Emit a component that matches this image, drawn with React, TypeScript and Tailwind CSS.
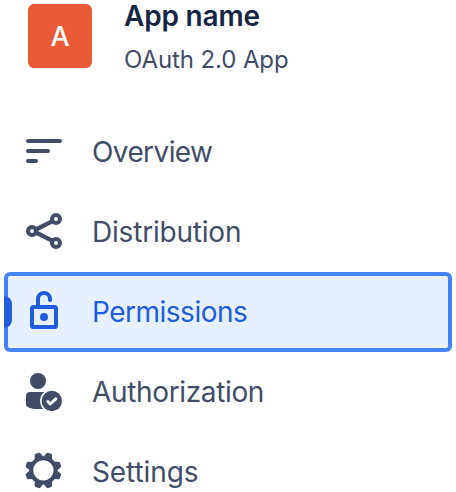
import type { ReactNode } from "react";

function OverviewIcon() {
  return (
    <svg className="size-12" viewBox="0 0 48 48" fill="none" stroke="currentColor" strokeWidth="4" strokeLinecap="round">
      <path d="M8 13H40M8 23H28M8 33H16" />
    </svg>
  );
}

function ShareIcon() {
  return (
    <svg className="size-12" viewBox="0 0 48 48" fill="none" stroke="currentColor" strokeWidth="4">
      <path d="M33 12.800 15 22M33 33.200 15 24" strokeWidth="4.300" />
      <circle cx="12" cy="23" r="4" />
      <circle cx="36" cy="11" r="4" />
      <circle cx="36" cy="35" r="4" />
    </svg>
  );
}

function UnlockIcon() {
  return (
    <svg className="size-12" viewBox="0 0 48 48" fill="none" stroke="currentColor" strokeWidth="4">
      <rect x="12" y="19" width="24" height="20" rx="1.5" />
      <path d="M18 19V11a6 6 0 0 1 12 0V12" strokeLinecap="round" />
      <circle cx="24" cy="29" r="4" fill="currentColor" stroke="none" />
    </svg>
  );
}

function UserCheckIcon() {
  return (
    <svg className="size-12" viewBox="0 0 48 48" fill="currentColor">
      <circle cx="18" cy="13" r="8" />
      <path d="M6 28a4 4 0 0 1 4-4H25V41H17C11 41 6 39 6 36.500Z" />
      <circle cx="31.800" cy="33" r="11.700" fill="white" />
      <circle cx="31.800" cy="33" r="10.200" />
      <path d="M27.800 33.500 30.300 36 35.800 30.800" fill="none" stroke="white" strokeWidth="3" strokeLinecap="round" strokeLinejoin="round" />
    </svg>
  );
}

const teeth = [20, 70, 110, 160, 200, 250, 290, 340];

function GearIcon() {
  return (
    <svg className="size-12" viewBox="0 0 48 48" fill="currentColor">
      <g transform="translate(23.4 22.400)">
        <circle r="12.200" fill="none" stroke="currentColor" strokeWidth="4" />
        {teeth.map((angle) => (
          <path key={angle} transform={`rotate(${angle})`} d="M-4.600-12.500-3.200-16.800Q-2.800-18.200-1.600-18.200H1.600Q2.800-18.200 3.200-16.800L4.600-12.500Z" />
        ))}
      </g>
    </svg>
  );
}

function NavItem({ icon, label, spacing }: { icon: ReactNode; label: string; spacing: string }) {
  return (
    <li className="flex h-20 items-center gap-6 pl-5 text-[#414d67]">
      {icon}
      <span className={`text-[28px] leading-8 ${spacing}`}>{label}</span>
    </li>
  );
}

export default function App() {
  return (
    <aside className="h-[492px] w-[456px] overflow-hidden bg-white font-[Inter,sans-serif]">
      <header className="flex h-28 items-start gap-8 pl-7 pt-1">
        <div className="flex size-16 items-center justify-center rounded-md bg-[#eb5a36] pt-0.5 text-[27px] font-medium text-white">A</div>
        <div className="-mt-1 whitespace-nowrap">
          <h1 className="text-[28px] leading-8 font-semibold tracking-[-0.2px] text-[#172545]">App name</h1>
          <p className="mt-3 text-2xl leading-8 tracking-[-0.1px] text-[#414d67]">OAuth 2.0 App</p>
        </div>
      </header>
      <nav>
        <ul>
          <NavItem icon={<OverviewIcon />} label="Overview" spacing="tracking-[-0.6px]" />
          <NavItem icon={<ShareIcon />} label="Distribution" spacing="tracking-[-0.2px]" />
          <li className="mx-1 flex h-20 items-center overflow-hidden rounded-md bg-[#e7f0fe] text-[#205ddc] inset-ring-4 inset-ring-[#4385f8]">
            <span className="h-8 w-2 rounded-r-lg bg-[#205ddc]" />
            <span className="ml-2 flex items-center gap-6">
              <UnlockIcon />
              <span className="text-[28px] leading-8 tracking-[-0.5px]">Permissions</span>
            </span>
          </li>
          <NavItem icon={<UserCheckIcon />} label="Authorization" spacing="tracking-[-0.35px]" />
          <NavItem icon={<GearIcon />} label="Settings" spacing="tracking-[-0.1px]" />
        </ul>
      </nav>
    </aside>
  );
}
